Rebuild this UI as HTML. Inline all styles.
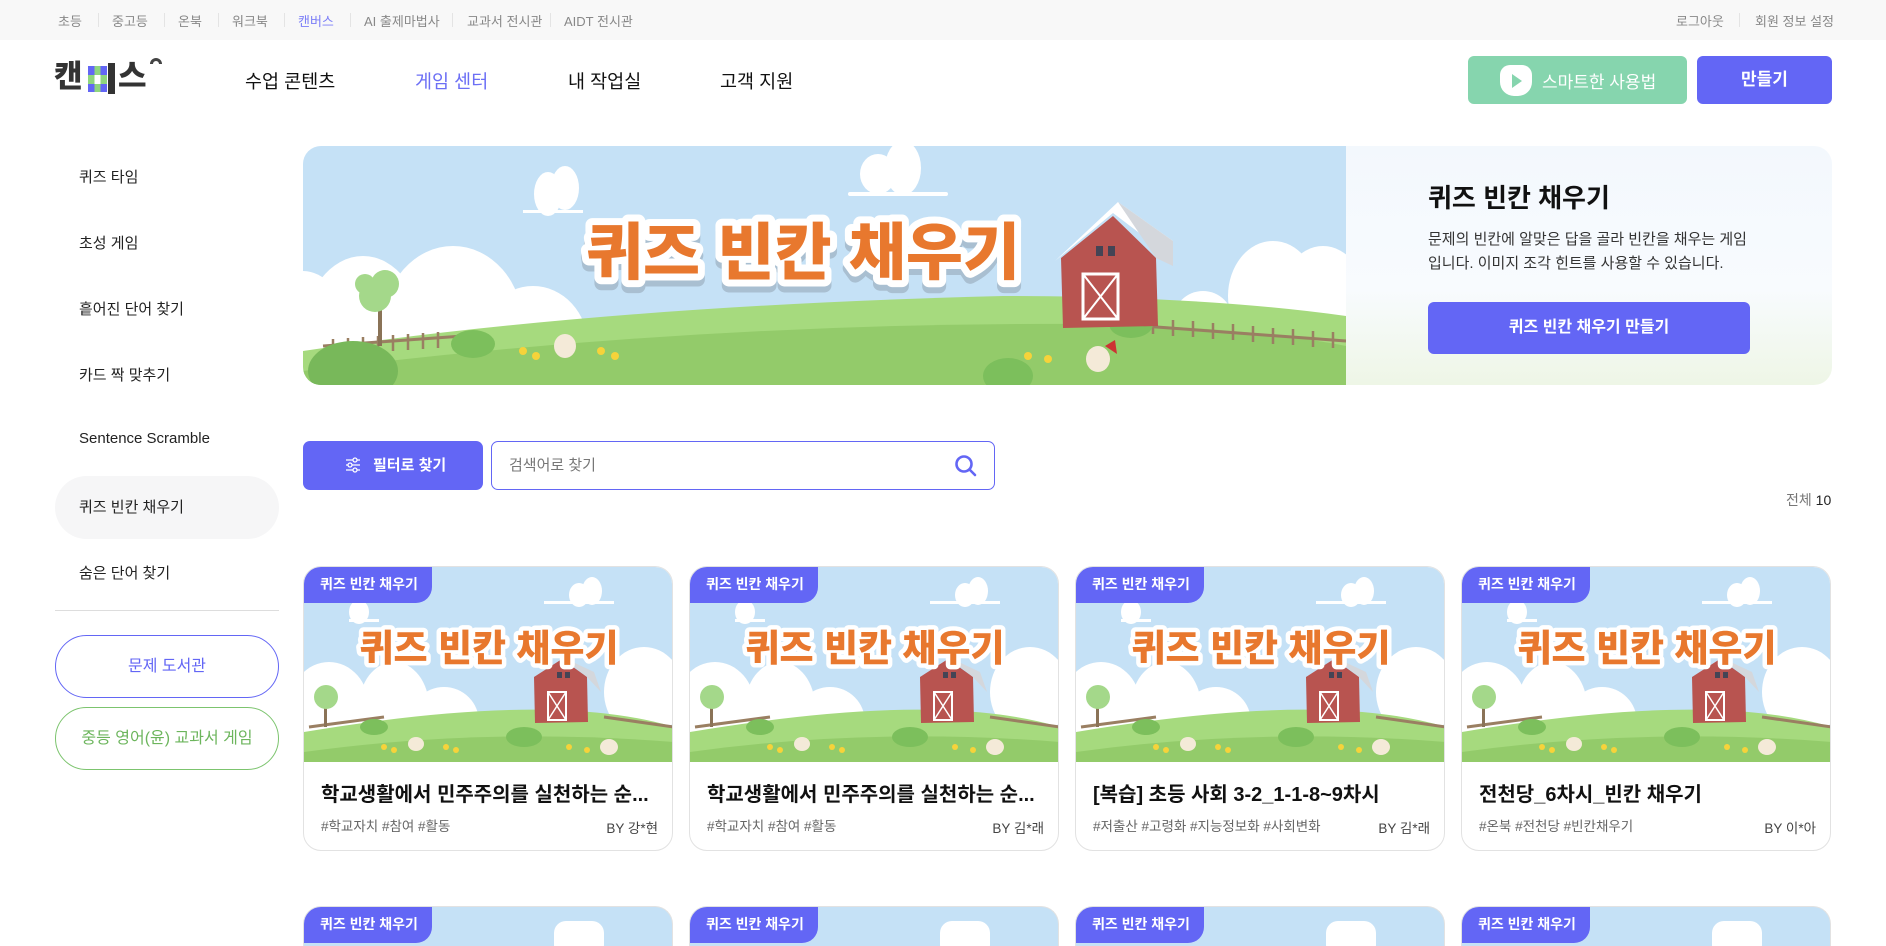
<!DOCTYPE html>
<html lang="ko"><head><meta charset="utf-8">
<style>
*{box-sizing:border-box;margin:0;padding:0}
html{width:1886px;height:946px;overflow:hidden}
body{width:1886px;height:946px;overflow:hidden;background:#fff;font-family:"Liberation Sans","Noto Sans CJK KR",sans-serif;color:#111;position:relative}
.abs{position:absolute}
.top{position:absolute;left:0;top:0;width:1886px;height:40px;background:#f8f8f8}
.top span{position:absolute;top:11px;font-size:13px;color:#888;white-space:nowrap}
.top i{position:absolute;top:13px;width:1px;height:14px;background:#e4e4e4}
.nav{position:absolute;top:68px;font-size:18.5px;color:#111;white-space:nowrap}
.side{position:absolute;left:79px;font-size:15px;color:#222;white-space:nowrap}
.card{position:absolute;width:370px;height:285px;border:1px solid #e2e2e2;border-radius:18px;overflow:hidden;background:#fff}
.card svg{position:absolute;left:0;top:0}
.tag{position:absolute;left:0;top:0;height:36px;padding:0 14px 0 16px;line-height:35px;background:#6366f5;color:#fff;font-size:14px;font-weight:700;border-bottom-right-radius:16px;white-space:nowrap}
.ct{position:absolute;left:17px;top:211px;font-size:20px;font-weight:700;color:#111;white-space:nowrap}
.tg{position:absolute;left:17px;top:248px;font-size:13.5px;color:#666;white-space:nowrap}
.by{position:absolute;right:14px;top:250px;font-size:13.5px;color:#444;white-space:nowrap}
</style></head><body>
<div class="top">
<span style="left:58px">초등</span><i style="left:98px"></i>
<span style="left:112px">중고등</span><i style="left:164px"></i>
<span style="left:178px">온북</span><i style="left:218px"></i>
<span style="left:232px">워크북</span><i style="left:284px"></i>
<span style="left:298px;color:#7b7ef7">캔버스</span><i style="left:350px"></i>
<span style="left:364px">AI 출제마법사</span><i style="left:452px"></i>
<span style="left:467px">교과서 전시관</span><i style="left:550px"></i>
<span style="left:564px">AIDT 전시관</span>
<span style="left:1676px">로그아웃</span><i style="left:1739px"></i>
<span style="left:1755px">회원 정보 설정</span>
</div>
<!-- logo -->
<div class="abs" style="left:54px;top:58px;font-size:31px;font-weight:900;color:#333;line-height:38px">캔</div>
<div class="abs" style="left:88px;top:66px;width:19px;height:26px;background:
linear-gradient(90deg,#6366f5 0 33%,#8fd67e 33% 66%,#6366f5 66%);"></div>
<div class="abs" style="left:88px;top:75px;width:19px;height:9px;background:linear-gradient(90deg,#8fd67e 0 33%,#fff 33% 66%,#8fd67e 66%)"></div>
<div class="abs" style="left:108px;top:63px;width:7px;height:31px;background:#333"></div>
<div class="abs" style="left:118px;top:58px;font-size:31px;font-weight:900;color:#333;line-height:38px">스</div>
<div class="abs" style="left:150px;top:58px;width:12px;height:12px;border:3px solid #444;border-radius:50%;clip-path:inset(0 0 50% 0)"></div>
<div class="nav" style="left:245px">수업 콘텐츠</div>
<div class="nav" style="left:415px;color:#6c6ff5">게임 센터</div>
<div class="nav" style="left:568px">내 작업실</div>
<div class="nav" style="left:720px">고객 지원</div>
<div class="abs" style="left:1468px;top:56px;width:219px;height:48px;background:#86d5ae;border-radius:6px"></div>
<div class="abs" style="left:1500px;top:65px;width:32px;height:31px;background:#fff;border-radius:10px 10px 14px 14px"></div>
<div class="abs" style="left:1512px;top:74px;width:0;height:0;border-left:10px solid #86d5ae;border-top:7px solid transparent;border-bottom:7px solid transparent"></div>
<div class="abs" style="left:1542px;top:68px;font-size:17px;color:#fff">스마트한 사용법</div>
<div class="abs" style="left:1697px;top:56px;width:135px;height:48px;background:#6366f5;border-radius:6px;color:#fff;font-size:17px;font-weight:700;text-align:center;line-height:48px">만들기</div>

<!-- sidebar -->
<div class="side" style="top:166px">퀴즈 타임</div>
<div class="side" style="top:232px">초성 게임</div>
<div class="side" style="top:298px">흩어진 단어 찾기</div>
<div class="side" style="top:364px">카드 짝 맞추기</div>
<div class="side" style="top:430px">Sentence Scramble</div>
<div class="abs" style="left:55px;top:476px;width:224px;height:63px;background:#f6f6f7;border-radius:32px"></div>
<div class="side" style="top:496px">퀴즈 빈칸 채우기</div>
<div class="side" style="top:562px">숨은 단어 찾기</div>
<div class="abs" style="left:55px;top:610px;width:224px;height:1px;background:#ddd"></div>
<div class="abs" style="left:55px;top:635px;width:224px;height:63px;border:1px solid #6366f5;border-radius:32px;text-align:center;line-height:61px;color:#6366f5;font-size:16px">문제 도서관</div>
<div class="abs" style="left:55px;top:707px;width:224px;height:63px;border:1px solid #7cc46e;border-radius:32px;text-align:center;line-height:61px;color:#6cb55c;font-size:16px">중등 영어(윤) 교과서 게임</div>

<!-- banner -->
<div class="abs" style="left:303px;top:146px;width:1529px;height:239px;border-radius:18px;overflow:hidden;background:linear-gradient(180deg,#f3f8fd 0%,#f8fbfe 60%,#eef6e6 100%)">
<svg width="1043" height="239" viewBox="0 0 1043 239" style="position:absolute;left:0;top:0">
<rect width="1043" height="239" fill="#c5e1f6"/>
<g fill="#fff">
<ellipse cx="60" cy="190" rx="60" ry="80"/><ellipse cx="150" cy="180" rx="70" ry="80"/><ellipse cx="230" cy="200" rx="55" ry="60"/><ellipse cx="0" cy="175" rx="40" ry="50"/>
<ellipse cx="970" cy="150" rx="45" ry="55"/><ellipse cx="1020" cy="160" rx="45" ry="60"/><ellipse cx="900" cy="175" rx="30" ry="30"/>
<ellipse cx="245" cy="48" rx="14" ry="22"/><ellipse cx="262" cy="42" rx="14" ry="22"/><rect x="220" y="64" width="60" height="3"/>
<ellipse cx="575" cy="28" rx="18" ry="20"/><ellipse cx="600" cy="22" rx="18" ry="27"/><rect x="545" y="46" width="100" height="4" rx="2"/>
</g>
<path d="M0 205 Q300 160 700 150 Q900 150 1043 170 L1043 239 L0 239Z" fill="#a6da7e"/>
<path d="M0 225 Q400 175 800 178 Q950 182 1043 200 L1043 239 L0 239Z" fill="#93cb6a"/>
<g stroke="#9a7f62" stroke-width="3"><path d="M20 200 L160 190 M840 180 L1043 195"/></g>
<g stroke="#9a7f62" stroke-width="2.5"><path d="M30 193v16M45 192v16M60 191v16M75 190v16M90 189v16M105 188v16M120 187v16M135 186v16M850 172v16M870 174v16M890 175v16M910 177v16M930 178v16M950 180v16M970 182v16M990 183v16M1010 185v16M1030 186v16"/></g>
<rect x="75" y="150" width="4" height="50" fill="#8a7357"/>
<circle cx="72" cy="150" r="16" fill="#a4d88a"/><circle cx="82" cy="138" r="14" fill="#a4d88a"/><circle cx="62" cy="138" r="10" fill="#a4d88a"/>
<ellipse cx="50" cy="225" rx="45" ry="30" fill="#78b85a"/><ellipse cx="170" cy="198" rx="22" ry="14" fill="#7cbf5c"/><ellipse cx="828" cy="178" rx="22" ry="14" fill="#7cbf5c"/>
<ellipse cx="705" cy="230" rx="25" ry="18" fill="#7cbf5c"/>
<path d="M758 112 L810 70 L853 112 L855 180 L760 182Z" fill="#b85450"/>
<path d="M752 115 L810 67 L860 105 L870 95 L815 56 Z" fill="#fff"/><path d="M815 56 L870 95 L870 120 L853 112Z" fill="#d4d7dc"/>
<rect x="780" y="128" width="35" height="45" fill="none" stroke="#fff" stroke-width="3"/><path d="M780 128L815 173M815 128L780 173" stroke="#fff" stroke-width="2"/>
<rect x="793" y="100" width="7" height="10" fill="#445"/><rect x="805" y="100" width="7" height="10" fill="#445"/>
<ellipse cx="262" cy="200" rx="11" ry="12" fill="#f4ead8"/><ellipse cx="795" cy="213" rx="12" ry="13" fill="#f4ead8"/><path d="M802 200 l10-6 2 14z" fill="#c33"/>
<g fill="#f6d33a"><circle cx="220" cy="205" r="4"/><circle cx="233" cy="210" r="4"/><circle cx="298" cy="205" r="4"/><circle cx="312" cy="210" r="4"/><circle cx="725" cy="210" r="4"/><circle cx="745" cy="213" r="4"/></g>
<text x="500" y="134" text-anchor="middle" font-family="Noto Sans CJK KR" font-weight="900" font-size="62" fill="#a9bfd1" stroke="#a9bfd1" stroke-width="14" stroke-linejoin="round">퀴즈 빈칸 채우기</text>
<text x="500" y="128" text-anchor="middle" font-family="Noto Sans CJK KR" font-weight="900" font-size="62" fill="#e8782e" stroke="#fff" stroke-width="14" stroke-linejoin="round" paint-order="stroke">퀴즈 빈칸 채우기</text>
</svg>
<div class="abs" style="left:1125px;top:32px;font-size:26px;font-weight:700;color:#111;white-space:nowrap">퀴즈 빈칸 채우기</div>
<div class="abs" style="left:1125px;top:82px;font-size:15px;color:#333;line-height:24px;white-space:nowrap">문제의 빈칸에 알맞은 답을 골라 빈칸을 채우는 게임<br>입니다. 이미지 조각 힌트를 사용할 수 있습니다.</div>
<div class="abs" style="left:1125px;top:156px;width:322px;height:52px;background:#6366f5;border-radius:6px;color:#fff;font-size:16px;font-weight:700;text-align:center;line-height:52px">퀴즈 빈칸 채우기 만들기</div>
</div>

<!-- filter/search -->
<div class="abs" style="left:303px;top:441px;width:180px;height:49px;background:#6366f5;border-radius:7px;color:#fff;font-size:15px;font-weight:700;line-height:49px;padding-left:70px">필터로 찾기</div>
<svg class="abs" style="left:345px;top:457px" width="16" height="16" viewBox="0 0 16 16" fill="none" stroke="#fff" stroke-width="1.3"><path d="M1 3h14M1 8h14M1 13h14"/><circle cx="10" cy="3" r="2" fill="#6366f5"/><circle cx="5" cy="8" r="2" fill="#6366f5"/><circle cx="10" cy="13" r="2" fill="#6366f5"/></svg>
<div class="abs" style="left:491px;top:441px;width:504px;height:49px;border:1px solid #6366f5;border-radius:7px;font-size:15px;color:#777;line-height:47px;padding-left:17px">검색어로 찾기</div>
<svg class="abs" style="left:954px;top:454px" width="24" height="24" viewBox="0 0 24 24" fill="none" stroke="#6366f5" stroke-width="2.6" stroke-linecap="round"><circle cx="10" cy="10" r="7.5"/><path d="M15.5 15.5L21 21"/></svg>
<div class="abs" style="left:1786px;top:490px;font-size:14px;color:#777">전체 <span style="color:#222">10</span></div>

<!-- cards -->
<div class="card" style="left:303px;top:566px"><svg width="370" height="195" viewBox="0 0 370 195"><rect width="370" height="195" fill="#c5e1f6"/><g fill="#fff"><ellipse cx="25" cy="140" rx="40" ry="45"/><ellipse cx="90" cy="140" rx="35" ry="45"/><ellipse cx="140" cy="155" rx="35" ry="35"/><ellipse cx="340" cy="125" rx="40" ry="45"/><ellipse cx="275" cy="28" rx="10" ry="12"/><ellipse cx="288" cy="24" rx="10" ry="14"/><rect x="240" y="34" width="70" height="3"/><ellipse cx="55" cy="45" rx="10" ry="12"/><rect x="45" y="52" width="30" height="3"/></g><path d="M0 165 Q150 140 250 143 Q320 145 370 160 L370 195 L0 195Z" fill="#a6da7e"/><path d="M0 185 Q180 160 370 175 L370 195 L0 195Z" fill="#93cb6a"/><path d="M5 160 L80 150 M300 150 L370 160" stroke="#9a7f62" stroke-width="3"/><rect x="20" y="130" width="3" height="30" fill="#8a7357"/><circle cx="22" cy="130" r="12" fill="#a4d88a"/><ellipse cx="70" cy="160" rx="14" ry="8" fill="#7cbf5c"/><ellipse cx="220" cy="170" rx="18" ry="10" fill="#7cbf5c"/><path d="M230 110 L258 92 L283 110 L284 155 L231 156Z" fill="#b85450"/><path d="M258 90 L283 110 L297 125 L290 105Z" fill="#d4d7dc"/><rect x="244" y="125" width="18" height="28" fill="none" stroke="#fff" stroke-width="2"/><path d="M244 125L262 153M262 125L244 153" stroke="#fff" stroke-width="1.5"/><rect x="253" y="105" width="5" height="6" fill="#445"/><rect x="261" y="105" width="5" height="6" fill="#445"/><ellipse cx="112" cy="177" rx="8" ry="7" fill="#f4ead8"/><ellipse cx="305" cy="180" rx="9" ry="8" fill="#f4ead8"/><g fill="#f6d33a"><circle cx="80" cy="180" r="3"/><circle cx="90" cy="183" r="3"/><circle cx="142" cy="180" r="3"/><circle cx="152" cy="183" r="3"/><circle cx="265" cy="180" r="3"/><circle cx="283" cy="183" r="3"/></g><text x="185" y="94" text-anchor="middle" font-family="Noto Sans CJK KR" font-weight="900" font-size="37" fill="#e8782e" stroke="#fff" stroke-width="9" stroke-linejoin="round" paint-order="stroke">퀴즈 빈칸 채우기</text></svg><div class="tag">퀴즈 빈칸 채우기</div><div class="ct">학교생활에서 민주주의를 실천하는 순...</div><div class="tg">#학교자치 #참여 #활동</div><div class="by">BY 강*현</div></div>

<div class="card" style="left:689px;top:566px"><svg width="370" height="195" viewBox="0 0 370 195"><rect width="370" height="195" fill="#c5e1f6"/><g fill="#fff"><ellipse cx="25" cy="140" rx="40" ry="45"/><ellipse cx="90" cy="140" rx="35" ry="45"/><ellipse cx="140" cy="155" rx="35" ry="35"/><ellipse cx="340" cy="125" rx="40" ry="45"/><ellipse cx="275" cy="28" rx="10" ry="12"/><ellipse cx="288" cy="24" rx="10" ry="14"/><rect x="240" y="34" width="70" height="3"/><ellipse cx="55" cy="45" rx="10" ry="12"/><rect x="45" y="52" width="30" height="3"/></g><path d="M0 165 Q150 140 250 143 Q320 145 370 160 L370 195 L0 195Z" fill="#a6da7e"/><path d="M0 185 Q180 160 370 175 L370 195 L0 195Z" fill="#93cb6a"/><path d="M5 160 L80 150 M300 150 L370 160" stroke="#9a7f62" stroke-width="3"/><rect x="20" y="130" width="3" height="30" fill="#8a7357"/><circle cx="22" cy="130" r="12" fill="#a4d88a"/><ellipse cx="70" cy="160" rx="14" ry="8" fill="#7cbf5c"/><ellipse cx="220" cy="170" rx="18" ry="10" fill="#7cbf5c"/><path d="M230 110 L258 92 L283 110 L284 155 L231 156Z" fill="#b85450"/><path d="M258 90 L283 110 L297 125 L290 105Z" fill="#d4d7dc"/><rect x="244" y="125" width="18" height="28" fill="none" stroke="#fff" stroke-width="2"/><path d="M244 125L262 153M262 125L244 153" stroke="#fff" stroke-width="1.5"/><rect x="253" y="105" width="5" height="6" fill="#445"/><rect x="261" y="105" width="5" height="6" fill="#445"/><ellipse cx="112" cy="177" rx="8" ry="7" fill="#f4ead8"/><ellipse cx="305" cy="180" rx="9" ry="8" fill="#f4ead8"/><g fill="#f6d33a"><circle cx="80" cy="180" r="3"/><circle cx="90" cy="183" r="3"/><circle cx="142" cy="180" r="3"/><circle cx="152" cy="183" r="3"/><circle cx="265" cy="180" r="3"/><circle cx="283" cy="183" r="3"/></g><text x="185" y="94" text-anchor="middle" font-family="Noto Sans CJK KR" font-weight="900" font-size="37" fill="#e8782e" stroke="#fff" stroke-width="9" stroke-linejoin="round" paint-order="stroke">퀴즈 빈칸 채우기</text></svg><div class="tag">퀴즈 빈칸 채우기</div><div class="ct">학교생활에서 민주주의를 실천하는 순...</div><div class="tg">#학교자치 #참여 #활동</div><div class="by">BY 김*래</div></div>

<div class="card" style="left:1075px;top:566px"><svg width="370" height="195" viewBox="0 0 370 195"><rect width="370" height="195" fill="#c5e1f6"/><g fill="#fff"><ellipse cx="25" cy="140" rx="40" ry="45"/><ellipse cx="90" cy="140" rx="35" ry="45"/><ellipse cx="140" cy="155" rx="35" ry="35"/><ellipse cx="340" cy="125" rx="40" ry="45"/><ellipse cx="275" cy="28" rx="10" ry="12"/><ellipse cx="288" cy="24" rx="10" ry="14"/><rect x="240" y="34" width="70" height="3"/><ellipse cx="55" cy="45" rx="10" ry="12"/><rect x="45" y="52" width="30" height="3"/></g><path d="M0 165 Q150 140 250 143 Q320 145 370 160 L370 195 L0 195Z" fill="#a6da7e"/><path d="M0 185 Q180 160 370 175 L370 195 L0 195Z" fill="#93cb6a"/><path d="M5 160 L80 150 M300 150 L370 160" stroke="#9a7f62" stroke-width="3"/><rect x="20" y="130" width="3" height="30" fill="#8a7357"/><circle cx="22" cy="130" r="12" fill="#a4d88a"/><ellipse cx="70" cy="160" rx="14" ry="8" fill="#7cbf5c"/><ellipse cx="220" cy="170" rx="18" ry="10" fill="#7cbf5c"/><path d="M230 110 L258 92 L283 110 L284 155 L231 156Z" fill="#b85450"/><path d="M258 90 L283 110 L297 125 L290 105Z" fill="#d4d7dc"/><rect x="244" y="125" width="18" height="28" fill="none" stroke="#fff" stroke-width="2"/><path d="M244 125L262 153M262 125L244 153" stroke="#fff" stroke-width="1.5"/><rect x="253" y="105" width="5" height="6" fill="#445"/><rect x="261" y="105" width="5" height="6" fill="#445"/><ellipse cx="112" cy="177" rx="8" ry="7" fill="#f4ead8"/><ellipse cx="305" cy="180" rx="9" ry="8" fill="#f4ead8"/><g fill="#f6d33a"><circle cx="80" cy="180" r="3"/><circle cx="90" cy="183" r="3"/><circle cx="142" cy="180" r="3"/><circle cx="152" cy="183" r="3"/><circle cx="265" cy="180" r="3"/><circle cx="283" cy="183" r="3"/></g><text x="185" y="94" text-anchor="middle" font-family="Noto Sans CJK KR" font-weight="900" font-size="37" fill="#e8782e" stroke="#fff" stroke-width="9" stroke-linejoin="round" paint-order="stroke">퀴즈 빈칸 채우기</text></svg><div class="tag">퀴즈 빈칸 채우기</div><div class="ct">[복습] 초등 사회 3-2_1-1-8~9차시</div><div class="tg">#저출산 #고령화 #지능정보화 #사회변화</div><div class="by">BY 김*래</div></div>

<div class="card" style="left:1461px;top:566px"><svg width="370" height="195" viewBox="0 0 370 195"><rect width="370" height="195" fill="#c5e1f6"/><g fill="#fff"><ellipse cx="25" cy="140" rx="40" ry="45"/><ellipse cx="90" cy="140" rx="35" ry="45"/><ellipse cx="140" cy="155" rx="35" ry="35"/><ellipse cx="340" cy="125" rx="40" ry="45"/><ellipse cx="275" cy="28" rx="10" ry="12"/><ellipse cx="288" cy="24" rx="10" ry="14"/><rect x="240" y="34" width="70" height="3"/><ellipse cx="55" cy="45" rx="10" ry="12"/><rect x="45" y="52" width="30" height="3"/></g><path d="M0 165 Q150 140 250 143 Q320 145 370 160 L370 195 L0 195Z" fill="#a6da7e"/><path d="M0 185 Q180 160 370 175 L370 195 L0 195Z" fill="#93cb6a"/><path d="M5 160 L80 150 M300 150 L370 160" stroke="#9a7f62" stroke-width="3"/><rect x="20" y="130" width="3" height="30" fill="#8a7357"/><circle cx="22" cy="130" r="12" fill="#a4d88a"/><ellipse cx="70" cy="160" rx="14" ry="8" fill="#7cbf5c"/><ellipse cx="220" cy="170" rx="18" ry="10" fill="#7cbf5c"/><path d="M230 110 L258 92 L283 110 L284 155 L231 156Z" fill="#b85450"/><path d="M258 90 L283 110 L297 125 L290 105Z" fill="#d4d7dc"/><rect x="244" y="125" width="18" height="28" fill="none" stroke="#fff" stroke-width="2"/><path d="M244 125L262 153M262 125L244 153" stroke="#fff" stroke-width="1.5"/><rect x="253" y="105" width="5" height="6" fill="#445"/><rect x="261" y="105" width="5" height="6" fill="#445"/><ellipse cx="112" cy="177" rx="8" ry="7" fill="#f4ead8"/><ellipse cx="305" cy="180" rx="9" ry="8" fill="#f4ead8"/><g fill="#f6d33a"><circle cx="80" cy="180" r="3"/><circle cx="90" cy="183" r="3"/><circle cx="142" cy="180" r="3"/><circle cx="152" cy="183" r="3"/><circle cx="265" cy="180" r="3"/><circle cx="283" cy="183" r="3"/></g><text x="185" y="94" text-anchor="middle" font-family="Noto Sans CJK KR" font-weight="900" font-size="37" fill="#e8782e" stroke="#fff" stroke-width="9" stroke-linejoin="round" paint-order="stroke">퀴즈 빈칸 채우기</text></svg><div class="tag">퀴즈 빈칸 채우기</div><div class="ct">전천당_6차시_빈칸 채우기</div><div class="tg">#온북 #전천당 #빈칸채우기</div><div class="by">BY 이*아</div></div>

<!-- second row (partial) -->
<div class="card" style="left:303px;top:906px;height:40px;border-bottom:none;border-radius:18px 18px 0 0;background:#c5e1f6"><div class="abs" style="left:250px;top:14px;width:50px;height:26px;background:#fff;border-radius:12px 12px 2px 2px"></div><div class="tag">퀴즈 빈칸 채우기</div></div>
<div class="card" style="left:689px;top:906px;height:40px;border-bottom:none;border-radius:18px 18px 0 0;background:#c5e1f6"><div class="abs" style="left:250px;top:14px;width:50px;height:26px;background:#fff;border-radius:12px 12px 2px 2px"></div><div class="tag">퀴즈 빈칸 채우기</div></div>
<div class="card" style="left:1075px;top:906px;height:40px;border-bottom:none;border-radius:18px 18px 0 0;background:#c5e1f6"><div class="abs" style="left:250px;top:14px;width:50px;height:26px;background:#fff;border-radius:12px 12px 2px 2px"></div><div class="tag">퀴즈 빈칸 채우기</div></div>
<div class="card" style="left:1461px;top:906px;height:40px;border-bottom:none;border-radius:18px 18px 0 0;background:#c5e1f6"><div class="abs" style="left:250px;top:14px;width:50px;height:26px;background:#fff;border-radius:12px 12px 2px 2px"></div><div class="tag">퀴즈 빈칸 채우기</div></div>
</body></html>
